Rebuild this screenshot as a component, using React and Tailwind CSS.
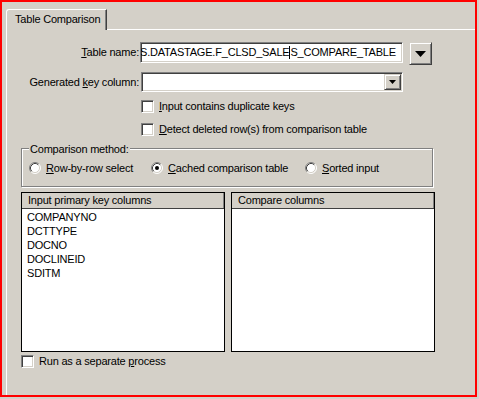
import React from "react";

const sunken =
  "border border-t-[#808080] border-l-[#808080] border-r-white border-b-white shadow-[inset_1px_1px_0_#404040,inset_-1px_-1px_0_#d4d0c8]";
const raised =
  "border border-t-[#d4d0c8] border-l-[#d4d0c8] border-r-[#404040] border-b-[#404040] shadow-[inset_1px_1px_0_#fff,inset_-1px_-1px_0_#808080]";

function Radio({ checked }) {
  return (
    <svg width="12" height="12" viewBox="0 0 12 12" className="shrink-0">
      <circle cx="6" cy="6" r="5" fill="#fff" />
      <path d="M2.11 9.89 A5.5 5.5 0 0 1 9.89 2.11" fill="none" stroke="#808080" />
      <path d="M9.89 2.11 A5.5 5.5 0 0 1 2.11 9.89" fill="none" stroke="#fff" />
      <path d="M2.82 9.18 A4.5 4.5 0 0 1 9.18 2.82" fill="none" stroke="#404040" />
      <path d="M9.18 2.82 A4.5 4.5 0 0 1 2.82 9.18" fill="none" stroke="#d4d0c8" />
      {checked && <circle cx="6" cy="6" r="2" fill="#000" />}
    </svg>
  );
}

function Checkbox() {
  return <div className={`w-[13px] h-[13px] shrink-0 bg-white ${sunken}`} />;
}

function ListBox({ title, items }) {
  return (
    <div className="w-[204px] h-[160px] border border-black bg-white flex flex-col">
      <div className="h-[16px] shrink-0 bg-[#d4d0c8] border-b border-[#404040] pl-[6px] leading-[15px] shadow-[inset_-1px_0_0_#808080]">
        {title}
      </div>
      <div className="pt-[1px] pl-[5px] leading-[14px]">
        {items.map((it) => (
          <div key={it}>{it}</div>
        ))}
      </div>
    </div>
  );
}

export default function App() {
  const keys = ["COMPANYNO", "DCTTYPE", "DOCNO", "DOCLINEID", "SDITM"];

  return (
    <div className="w-[479px] h-[399px] bg-[#d4d0c8] font-['Liberation_Sans',Arial,sans-serif] text-[11px] tracking-[-0.2px] text-black">
      <div className="w-[477px] h-[397px] border-2 border-[#f00] overflow-hidden pl-[4px] pt-[7px]">
        {/* tab */}
        <div className="relative z-10 mb-[-1px] w-[101px] h-[21px] bg-[#d4d0c8] border-l border-t border-white border-r border-r-[#404040] rounded-tl-[3px] shadow-[inset_-1px_0_0_#808080] pl-[8px] pt-[3px] leading-[13px]">
          Table Comparison
        </div>

        {/* panel */}
        <div className="w-[480px] h-[380px] border-l border-t border-white">
          {/* table name */}
          <div className="flex items-start mt-[12px]">
            <div className="w-[132px] h-[21px] flex items-center justify-end">
              <span>
                <u>T</u>able name:
              </span>
            </div>
            <div className={`ml-[1px] w-[263px] h-[21px] bg-white overflow-hidden flex items-center ${sunken}`}>
              <span className="whitespace-nowrap ml-[-1px] flex items-center">
                S.DATASTAGE.F_CLSD_SALE
                <span className="inline-block w-px h-[13px] bg-black" />
                S_COMPARE_TABLE
              </span>
            </div>
            <div className={`ml-[6px] w-[23px] h-[23px] flex items-center justify-center ${raised}`}>
              <svg width="11" height="6" viewBox="0 0 11 6">
                <path d="M0 0 H11 L5.5 6 Z" fill="#000" />
              </svg>
            </div>
          </div>

          {/* generated key column */}
          <div className="flex items-start mt-[7px]">
            <div className="w-[132px] h-[20px] flex items-center justify-end">
              <span>
                Generated <u>k</u>ey column:
              </span>
            </div>
            <div className={`ml-[2px] w-[262px] h-[20px] bg-white flex justify-end items-start pt-px pr-px ${sunken}`}>
              <div className={`w-[17px] h-[16px] bg-[#d4d0c8] flex items-center justify-center ${raised}`}>
                <svg width="7" height="4" viewBox="0 0 7 4">
                  <path d="M0 0 H7 L3.5 4 Z" fill="#000" />
                </svg>
              </div>
            </div>
          </div>

          {/* checkboxes */}
          <div className="flex items-center gap-[5px] mt-[8px] ml-[134px] h-[13px]">
            <Checkbox />
            <span>
              <u>I</u>nput contains duplicate keys
            </span>
          </div>
          <div className="flex items-center gap-[5px] mt-[10px] ml-[134px] h-[13px]">
            <Checkbox />
            <span>
              <u>D</u>etect deleted row(s) from comparison table
            </span>
          </div>

          {/* comparison method */}
          <div className="relative mt-[12px] ml-[14px] w-[412px] h-[39px] border border-[#808080] shadow-[inset_1px_1px_0_#fff,1px_1px_0_#fff]">
            <span className="absolute left-[7px] top-[-6px] px-[1px] bg-[#d4d0c8] leading-[13px]">
              Comparison method:
            </span>
            <div className="flex items-center mt-[13px] pl-[7px] h-[12px]">
              <div className="w-[122px] flex items-center gap-[5px]">
                <Radio />
                <span>
                  <u>R</u>ow-by-row select
                </span>
              </div>
              <div className="w-[154px] flex items-center gap-[5px]">
                <Radio checked />
                <span>
                  <u>C</u>ached comparison table
                </span>
              </div>
              <div className="flex items-center gap-[5px]">
                <Radio />
                <span>
                  <u>S</u>orted input
                </span>
              </div>
            </div>
          </div>

          {/* lists */}
          <div className="flex gap-[6px] mt-[5px] ml-[14px]">
            <ListBox title="Input primary key columns" items={keys} />
            <ListBox title="Compare columns" items={[]} />
          </div>

          {/* separate process */}
          <div className="flex items-center gap-[5px] mt-[3px] ml-[14px] h-[13px]">
            <Checkbox />
            <span>
              Run as a separate <u>p</u>rocess
            </span>
          </div>
        </div>
      </div>
    </div>
  );
}
